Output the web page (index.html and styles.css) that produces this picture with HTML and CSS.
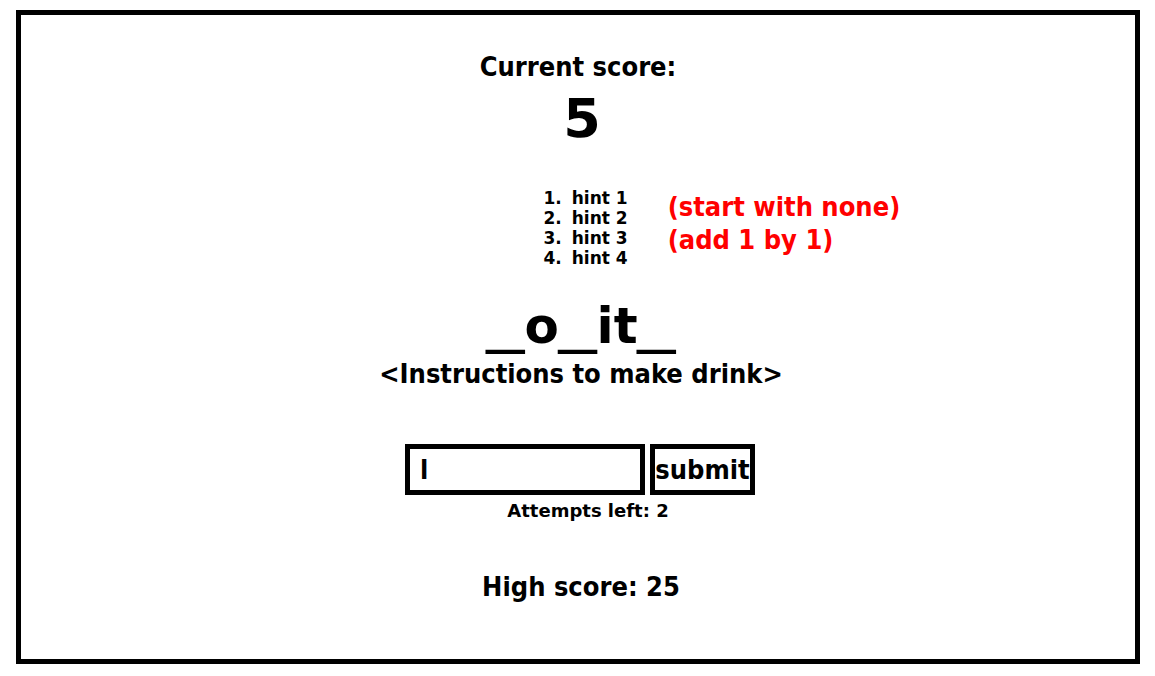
FILE: index.html
```html
<!DOCTYPE html>
<html lang="en">
<head>
<meta charset="utf-8">
<meta name="viewport" content="width=device-width, initial-scale=1">
<title>Drink guessing game</title>
<link rel="stylesheet" href="styles.css">
</head>
<body>
<main class="board">
  <section class="score">
    <h1 class="label">Current score:</h1>
    <p class="score-value">5</p>
  </section>
  <section class="hints">
    <ol class="hint-list">
      <li>hint 1</li>
      <li>hint 2</li>
      <li>hint 3</li>
      <li>hint 4</li>
    </ol>
    <p class="note">(start with none)<br>(add 1 by 1)</p>
  </section>
  <section class="puzzle">
    <p class="word"><span class="blank">_</span>o<span class="blank">_</span>it<span class="blank">_</span></p>
    <p class="label">&lt;Instructions to make drink&gt;</p>
  </section>
  <form class="guess">
    <div class="guess-row">
      <input class="guess-input" type="text" value="l" aria-label="Your guess">
      <button class="guess-submit" type="button">submit</button>
    </div>
    <p class="attempts">Attempts left: 2</p>
  </form>
  <p class="label high-score">High score: 25</p>
</main>
</body>
</html>
```
FILE: styles.css
```css
* {
  box-sizing: border-box;
}

body {
  margin: 0;
  padding: 10px 15px 12px 16px;
  background: #fff;
  color: #000;
  font-family: "DejaVu Sans Condensed", "Noto Sans", sans-serif;
  font-weight: 700;
}

h1, p, ol {
  margin: 0;
  padding: 0;
}

.board {
  display: flex;
  flex-direction: column;
  align-items: center;
  min-height: calc(100vh - 22px);
  padding-top: 36px;
  border: 5px solid #000;
}

.label {
  font-size: 27px;
  line-height: 32px;
  text-align: center;
}

.score-value {
  padding-left: 8px;
  font-family: "DejaVu Sans", sans-serif;
  font-size: 54px;
  line-height: 72px;
  text-align: center;
}

.hints {
  display: flex;
  gap: 40px;
  margin-top: 33px;
  padding-left: 284px;
}

.hint-list {
  padding-left: 28px;
  font-family: "DejaVu Sans", sans-serif;
  font-size: 17px;
  line-height: 20px;
}

.hint-list li {
  padding-left: 4px;
}

.note {
  padding-top: 2px;
  color: #f00;
  font-size: 27px;
  line-height: 33px;
}

.puzzle {
  margin-top: 26px;
  padding-left: 6px;
  text-align: center;
}

.word {
  font-family: "DejaVu Sans", sans-serif;
  font-size: 50px;
  line-height: 64px;
}

.blank {
  font-family: "Liberation Sans", sans-serif;
  font-size: 68px;
  font-weight: 400;
  line-height: 0;
  vertical-align: 3px;
}

.guess {
  margin-top: 54px;
  padding-left: 4px;
}

.guess-row {
  display: flex;
  gap: 5px;
}

.guess-input,
.guess-submit {
  height: 51px;
  margin: 0;
  border: 5px solid #000;
  border-radius: 0;
  background: #fff;
  color: #000;
  font: inherit;
  font-size: 27px;
}

.guess-input {
  width: 240px;
  padding: 0 10px;
}

.guess-submit {
  width: 105px;
  padding: 0;
}

.attempts {
  padding-left: 16px;
  font-family: "DejaVu Sans", sans-serif;
  font-size: 18px;
  line-height: 32px;
  text-align: center;
}

.high-score {
  margin-top: 44px;
  padding-left: 6px;
}
```
